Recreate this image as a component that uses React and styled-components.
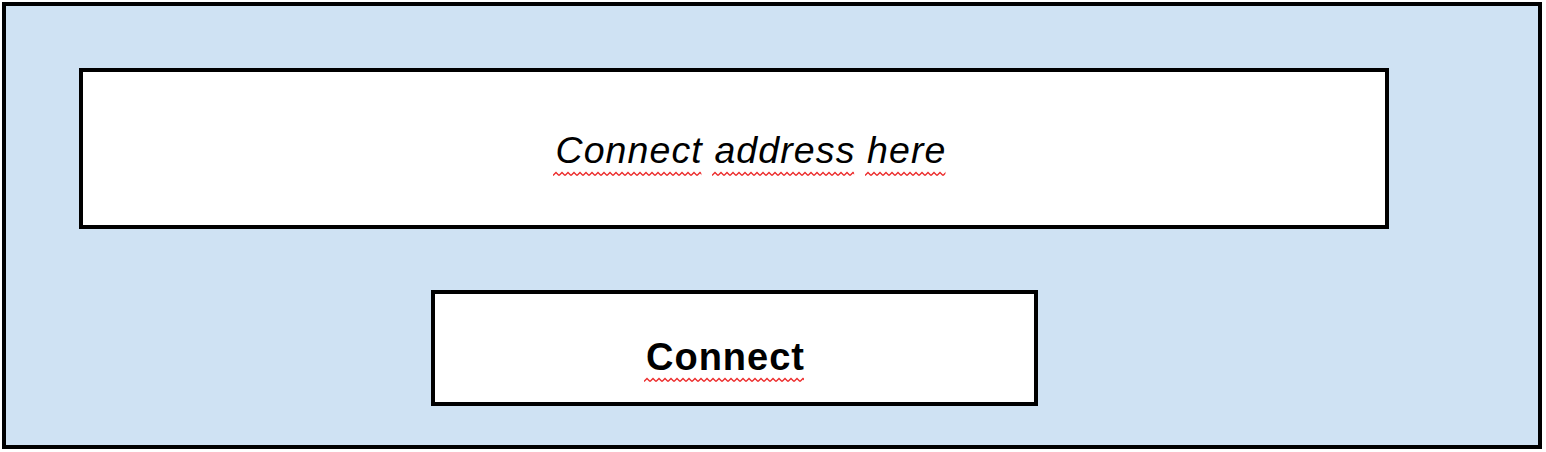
import React from "react";
import styled, { createGlobalStyle } from "styled-components";

const GlobalStyle = createGlobalStyle`
  body {
    margin: 0;
    background: #ffffff;
    font-family: "Liberation Sans", Arial, sans-serif;
  }
`;

const Frame = styled.div`
  box-sizing: border-box;
  margin: 2px;
  width: 1540px;
  height: 447px;
  border: 4px solid #000;
  background-color: #cfe2f3;
  padding: 62px 0 0 73px;
  display: flex;
  flex-direction: column;
  align-items: flex-start;
  gap: 61px;
`;

const AddressField = styled.div`
  box-sizing: border-box;
  width: 1310px;
  height: 161px;
  border: 4px solid #000;
  background-color: #fff;
  display: flex;
  align-items: center;
  justify-content: center;
  padding: 4px 0 0 34px;
  font-size: 37.5px;
  font-style: italic;
  letter-spacing: 1.1px;
  color: #000;
`;

const Button = styled.button`
  box-sizing: border-box;
  margin-left: 352px;
  width: 607px;
  height: 116px;
  border: 4px solid #000;
  border-radius: 0;
  background-color: #fff;
  display: flex;
  align-items: center;
  justify-content: center;
  padding: 19px 18px 0 0;
  font-family: "Liberation Sans", Arial, sans-serif;
  font-size: 38px;
  font-weight: bold;
  letter-spacing: 1px;
  color: #000;
  cursor: pointer;
`;

const Line = styled.span`
  white-space: pre;
`;

const Word = styled.span`
  position: relative;
  display: inline-block;
`;

const Squiggle = styled.svg`
  position: absolute;
  left: -2px;
  right: 0;
  top: ${({ top }) => top}px;
  width: calc(100% + 1px);
  height: 6px;
  overflow: hidden;
`;

const Misspelled = ({ children, top, id }) => (
  <Word>
    {children}
    <Squiggle top={top} aria-hidden="true">
      <defs>
        <pattern id={id} width="6" height="6" patternUnits="userSpaceOnUse">
          <polyline
            points="0,4.5 3,1.5 6,4.5"
            fill="none"
            stroke="#ec2b2b"
            strokeWidth="1.4"
          />
        </pattern>
      </defs>
      <rect width="100%" height="6" fill={`url(#${id})`} />
    </Squiggle>
  </Word>
);

const App = () => {
  return (
    <>
      <GlobalStyle />
      <Frame>
        <AddressField>
          <Line>
            <Misspelled id="sq1" top={42}>Connect</Misspelled>{" "}
            <Misspelled id="sq2" top={42}>address</Misspelled>{" "}
            <Misspelled id="sq3" top={42}>here</Misspelled>
          </Line>
        </AddressField>
        <Button>
          <Line>
            <Misspelled id="sq4" top={41}>Connect</Misspelled>
          </Line>
        </Button>
      </Frame>
    </>
  );
};

export default App;
